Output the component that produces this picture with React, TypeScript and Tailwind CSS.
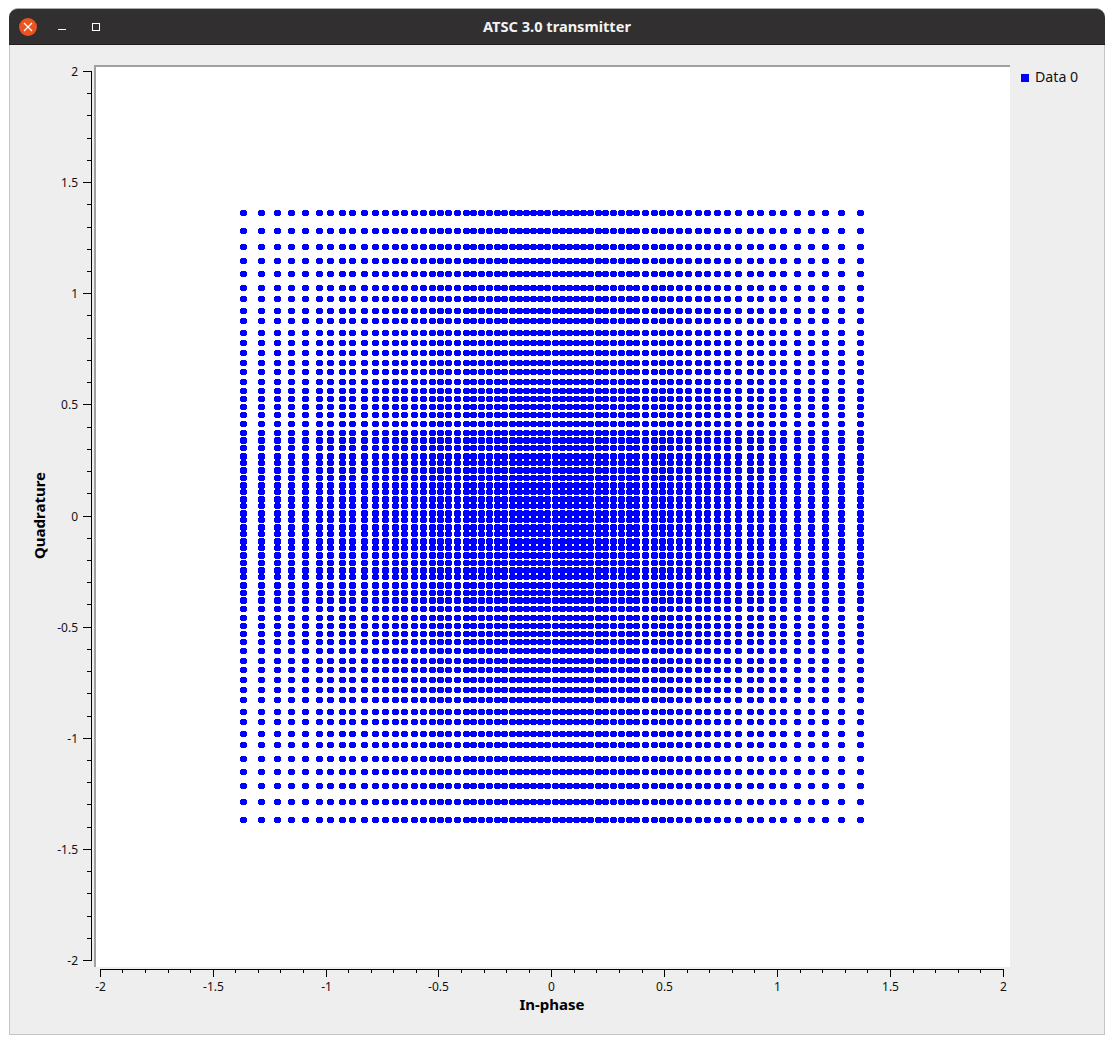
const font = { fontFamily: '"Noto Sans", "Liberation Sans", sans-serif' };

// distance of each column from the centre, the spacing is not uniform
const offsets = [
  4, 11, 18, 25, 32, 39, 47, 54, 62, 70, 78, 85, 94, 103, 111, 119, 128, 137,
  147, 156, 166, 176, 187, 199, 209, 221, 232, 246, 260, 274, 290, 308.5,
];

const signed = [...offsets.map((o) => -o), ...offsets];

// rows near the centre alternate between 6 and 7 pixels tall
function rowHeight(i: number) {
  const idx = i < 32 ? i : i - 32;
  if (idx > 11) return 4;
  const tall = i < 32 ? idx % 2 === 0 : idx % 2 === 1;
  return tall ? 5 : 4;
}

function dotsPath() {
  let d = "";
  signed.forEach((ox) => {
    signed.forEach((oy, r) => {
      const l = Math.round(551.8 + ox - 3.5);
      const t = Math.round(516.5 + oy * 0.9838 - 3);
      d += `M${l + 1} ${t}h5v1h1v${rowHeight(r)}h-1v1h-5v-1h-1v-${rowHeight(r)}h1z`;
    });
  });
  return d;
}

const steps = Array.from({ length: 41 }, (_, i) => (i - 20) / 10);

function YAxis() {
  const yOf = (v: number) => Math.round(515.5 - v * 222.25);
  return (
    <svg
      viewBox="54 65 40 902"
      className="block h-[902px] w-[40px] overflow-visible"
      shapeRendering="crispEdges"
    >
      <rect x={91} y={71} width={1} height={890} fill="#000" />
      {steps.map((v, i) => {
        const major = i % 5 === 0;
        return (
          <g key={v}>
            <rect
              x={major ? 83 : 87}
              y={yOf(v)}
              width={major ? 8 : 4}
              height={1}
              fill="#000"
            />
            {major && (
              <text
                x={78}
                y={yOf(v) + 4.5}
                textAnchor="end"
                fontSize={12}
                fill="#111"
                style={font}
              >
                {String(v)}
              </text>
            )}
          </g>
        );
      })}
    </svg>
  );
}

function XAxis() {
  const xOf = (v: number) => Math.floor(551.8 + v * 225.75);
  return (
    <svg
      viewBox="94 967 916 28"
      className="block h-[28px] w-[916px] overflow-visible"
      shapeRendering="crispEdges"
    >
      <rect x={100} y={969} width={904} height={1} fill="#000" />
      {steps.map((v, i) => {
        const major = i % 5 === 0;
        return (
          <g key={v}>
            <rect
              x={xOf(v)}
              y={969}
              width={1}
              height={major ? 8 : 4}
              fill="#000"
            />
            {major && (
              <text
                x={xOf(v) + 0.5}
                y={991}
                textAnchor="middle"
                fontSize={12}
                fill="#111"
                style={font}
              >
                {String(v)}
              </text>
            )}
          </g>
        );
      })}
    </svg>
  );
}

function TitleBar() {
  return (
    <div className="grid h-[37px] grid-cols-[1fr_auto_1fr] items-center rounded-t-[9px] border-t border-t-[#a8a8a8] border-b border-b-[#1f1e1e] bg-[#312f2f]">
      <div className="flex items-center pl-[10px]">
        <div className="flex h-[18px] w-[18px] items-center justify-center rounded-full bg-[#e95420]">
          <svg viewBox="0 0 10 10" className="h-[10px] w-[10px]">
            <path d="M1 1l8 8M9 1l-8 8" stroke="#fff" strokeWidth="1.2" fill="none" />
          </svg>
        </div>
        <div className="ml-[21px] mt-[5px] h-px w-[8px] bg-white" />
        <div className="ml-[26px] h-[8px] w-[8px] border border-white" />
      </div>
      <div className="text-[14.6px] font-bold text-[#f2f2f2]" style={font}>
        ATSC 3.0 transmitter
      </div>
      <div />
    </div>
  );
}

export default function App() {
  return (
    <div className="h-[1044px] w-[1114px] bg-white pl-[9px] pt-[8px]">
      <div className="w-[1096px]">
        <TitleBar />
        <div className="h-[990px] border-x border-b border-[#c4c4c4] bg-[#eeeeee] pt-[20px]">
          <div className="flex">
            {/* Y axis */}
            <div className="flex w-[84px]">
              <div className="flex w-[44px] items-center justify-end pr-[4px]">
                <div
                  className="rotate-180 text-[15px] font-bold text-black [writing-mode:vertical-rl]"
                  style={font}
                >
                  Quadrature
                </div>
              </div>
              <YAxis />
            </div>

            {/* Plot area */}
            <div className="h-[902px] w-[916px] border-l-2 border-t-2 border-[#a0a0a0] bg-white">
              <svg viewBox="96 67 914 900" className="block h-[900px] w-[914px]" shapeRendering="crispEdges">
                <path d={dotsPath()} fill="#0000ff" />
              </svg>
            </div>

            {/* Legend */}
            <div className="mt-[4px] flex h-[18px] flex-1 items-center gap-[6px] pl-[11px]">
              <div className="h-[8px] w-[8px] bg-[#0000ff]" />
              <span className="-mt-[2px] text-[14.2px] leading-[18px] text-[#111]" style={font}>
                Data 0
              </span>
            </div>
          </div>

          {/* X axis */}
          <div className="ml-[84px] w-[916px]">
            <XAxis />
            <div className="text-center text-[15px] font-bold leading-[19px] text-black" style={font}>
              In-phase
            </div>
          </div>
        </div>
      </div>
    </div>
  );
}
